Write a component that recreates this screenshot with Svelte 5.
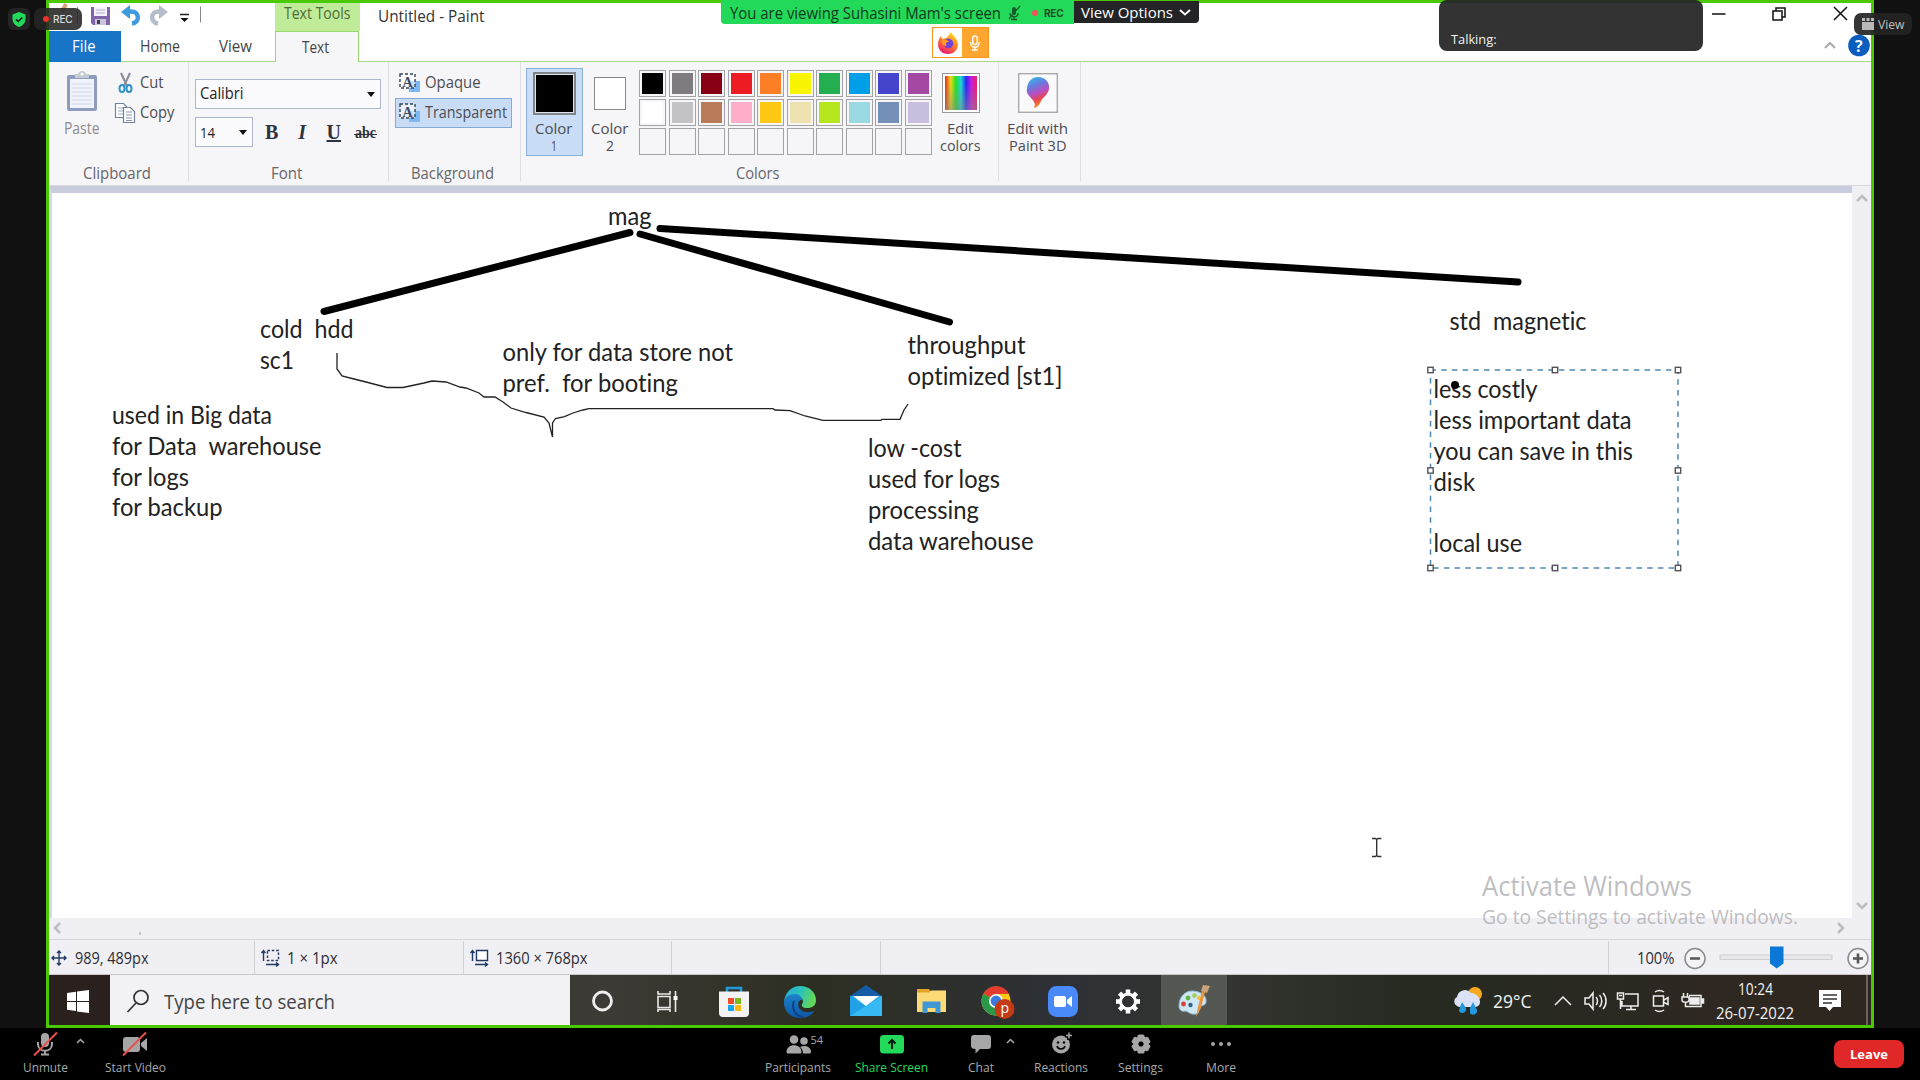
<script>
  const row1 = ['#000', '#7f7c80', '#870016', '#ed1c24', '#ff7f27', '#f8f500', '#23ae50', '#009fe8', '#4444cc', '#a349a4'];
  const row2 = ['#fff', '#c3c3c5', '#b97a57', '#ffaec9', '#ffc814', '#eee3b0', '#b5e51d', '#99d9e2', '#7590b8', '#c8bfdf'];
  const swatches = [...row1, ...row2, ...Array(10).fill('#f6f5f8')];

  const notes = [
    ['mag', 608, 225, 43.5],
    ['cold  hdd', 260, 337.5, 93.5],
    ['sc1', 260, 368.5, 34],
    ['only for data store not', 502.5, 360.5, 230.5],
    ['pref.  for booting', 502.5, 391.5, 175.5],
    ['used in Big data', 112, 423.5, 160],
    ['for Data  warehouse', 112, 454.5, 209.5],
    ['for logs', 112, 485.5, 77],
    ['for backup', 112, 516, 110.5],
    ['throughput', 907.5, 354, 118],
    ['optimized [st1]', 907.5, 384.5, 155],
    ['low -cost', 868, 457, 93.5],
    ['used for logs', 868, 487.5, 132],
    ['processing', 868, 518.5, 111],
    ['data warehouse', 868, 549.5, 165.5],
    ['std  magnetic', 1449.5, 329.5, 137],
    ['less costly', 1433.5, 398, 104],
    ['less important data', 1433.5, 429, 198],
    ['you can save in this', 1433.5, 459.5, 199.5],
    ['disk', 1433.5, 490.5, 41.5],
    ['local use', 1433.5, 552, 88.5]
  ];

  const handles = [
    [1430.5, 370], [1555, 370], [1678, 370],
    [1430.5, 470.5], [1678, 470.5],
    [1430.5, 568], [1555, 568], [1678, 568]
  ];

  const apps = ['cortana', 'tasks', 'store', 'edge', 'mail', 'folder', 'chrome', 'zoom', 'gear', 'paint'];
  const teeth = [0, 45, 90, 135, 180, 225, 270, 315];
</script>

{#snippet label(text, w, size)}
  <svg class="label" width={w} height={size * 1.36}>
    <text x="0" y={size * 1.05} font-size={size} textLength={w} lengthAdjust="spacingAndGlyphs">{text}</text>
  </svg>
{/snippet}

{#snippet marquee()}
  <svg width="21" height="20" viewBox="0 0 21 20">
    <rect x="10" y="8" width="11" height="11" fill="#7db8f5" />
    <rect x="1" y="1" width="15" height="14" fill="#fff" fill-opacity=".6" stroke="#345" stroke-width="1.4" stroke-dasharray="3 2" />
    <text x="3.6" y="13.5" font-family="Liberation Serif" font-weight="bold" font-size="14" fill="#3d4a66">A</text>
  </svg>
{/snippet}

<div class="page">
  <div class="stage">
    <div class="frame">
      <header class="title">
        <div class="quick">
          <svg width="162" height="28" viewBox="0 0 162 28">
            <path d="M17 1l-4 8" stroke="#d8a078" stroke-width="4" />
            <path d="M28.500 4v17" stroke="#999" />
            <path d="M42 4h19v18H44l-2-2z" fill="#8365ab" />
            <path d="M45 4h13v9H45z" fill="#f4f2fa" />
            <path d="M47 7h9M47 10h9" stroke="#b9aed0" />
            <path d="M46 16h11v6H46z" fill="#c9c4d6" /><path d="M48 17h3v4h-3z" fill="#463a63" />
            <path d="M78 8.500h4c9 0 9 11 1 12" fill="none" stroke="#3f9bdd" stroke-width="4.500" />
            <path d="M72 9l9-7v14z" fill="#3f9bdd" />
            <path d="M113 8.500h-3c-9 0-9 11-1 12" fill="none" stroke="#b4bdc9" stroke-width="4.500" />
            <path d="M119 9l-9-7v14z" fill="#b4bdc9" />
            <path d="M131 11.500h9" stroke="#222" stroke-width="1.500" /><path d="M131.500 15h8l-4 4z" fill="#111" />
            <path d="M151.500 3.500v16" stroke="#888" />
          </svg>
        </div>
        <div class="tools">{@render label('Text Tools', 66.5, 15.5)}</div>
        <div class="name">{@render label('Untitled - Paint', 106.5, 16)}</div>
        <svg class="winctl" width="160" height="28" viewBox="0 0 160 28" fill="none" stroke="#111" stroke-width="1.500">
          <path d="M-1 11h13.500" />
          <path d="M60 8h9v9h-9zM63 8V5h9v9h-3" />
          <path d="M121 4l13 13M134 4l-13 13" />
        </svg>
      </header>

      <nav class="tabs">
        <div class="tab file">{@render label('File', 23.5, 15.5)}</div>
        <div class="tab home">{@render label('Home', 40, 15.5)}</div>
        <div class="tab view">{@render label('View', 33, 15.5)}</div>
        <div class="tab text">{@render label('Text', 27, 15.5)}</div>
        <svg class="help" width="50" height="31" viewBox="0 0 50 31">
          <path d="M4 17l5-5 5 5" fill="none" stroke="#aaa" stroke-width="2" />
          <circle cx="38" cy="14.500" r="10.800" fill="#0a5cbd" />
          <text x="34" y="20.500" font-size="16" font-weight="bold" fill="#e8f3ff">?</text>
        </svg>
      </nav>

      <section class="ribbon">
        <div class="group clip">
          <div class="body">
            <div class="paste">
              <svg width="34" height="42" viewBox="0 0 34 42">
                <rect x="2" y="4" width="30" height="36" rx="2" fill="#8e9dbd" />
                <path d="M5 8h24v29H5z" fill="#f0f3fb" />
                <path d="M7 13h20M7 17h20M7 21h20M7 25h20M7 29h20M7 33h20" stroke="#ccd5e8" />
                <path d="M10 3h3c1-4 7-4 8 0h3v4H10z" fill="#c5cad5" /><circle cx="17" cy="3" r="1.500" fill="#fff" />
              </svg>
              {@render label('Paste', 35.5, 15.5)}
            </div>
            <div class="cutcopy">
              <div class="cmd">
                <svg width="22" height="22" viewBox="0 0 22 22" fill="none">
                  <path d="M7 1l6 13M16 1l-6 13" stroke="#8c8f9c" stroke-width="2.200" />
                  <ellipse cx="8" cy="16.500" rx="2.500" ry="3.500" stroke="#2f93c9" stroke-width="2" /><ellipse cx="15" cy="16.500" rx="2.500" ry="3.500" stroke="#2f93c9" stroke-width="2" />
                </svg>
                {@render label('Cut', 23.5, 15.5)}
              </div>
              <div class="cmd">
                <svg width="22" height="22" viewBox="0 0 22 22" fill="#fff" stroke="#76819c" stroke-width="1.200">
                  <path d="M1.500 1.500h8l3 3v11h-11z" /><path d="M4 6h6M4 9h6M4 12h5" stroke="#a4aec4" />
                  <path d="M9.500 5.500h7l4 4v11h-11z" /><path d="M12 10h6M12 13h6M12 16h6M12 18.500h6" stroke="#8794b3" />
                </svg>
                {@render label('Copy', 34.5, 15.5)}
              </div>
            </div>
          </div>
          <div class="cap">{@render label('Clipboard', 68, 15.5)}</div>
        </div>

        <div class="group font">
          <div class="body">
            <div class="combo wide">{@render label('Calibri', 43.5, 15.5)}<i class="tri"></i></div>
            <div class="fontrow">
              <div class="combo small">{@render label('14', 15, 15)}<i class="tri"></i></div>
              <b class="glyph">B</b><i class="glyph it">I</i><b class="glyph un">U</b><b class="glyph st">{@render label('abc', 21, 17)}</b>
            </div>
          </div>
          <div class="cap">{@render label('Font', 31.5, 15.5)}</div>
        </div>

        <div class="group back">
          <div class="body">
            <div class="opt">{@render marquee()}{@render label('Opaque', 55.5, 15.5)}</div>
            <div class="opt on">{@render marquee()}{@render label('Transparent', 82, 15.5)}</div>
          </div>
          <div class="cap">{@render label('Background', 83, 15.5)}</div>
        </div>

        <div class="group colors">
          <div class="body">
            <div class="pick on"><span class="chip big"></span>{@render label('Color', 37.5, 14.5)}{@render label('1', 6, 14.5)}</div>
            <div class="pick two"><span class="chip"></span>{@render label('Color', 37.5, 14.5)}{@render label('2', 8, 14.5)}</div>
            <div class="palette">
              {#each swatches as c}<span class="cell"><span class="fill" style:background={c}></span></span>{/each}
            </div>
            <div class="pick edit">
              <span class="spectrum"></span>
              {@render label('Edit', 26.5, 14.5)}{@render label('colors', 40.5, 14.5)}
            </div>
          </div>
          <div class="cap">{@render label('Colors', 43.5, 15.5)}</div>
        </div>

        <div class="group p3d">
          <div class="pick edit">
            <svg width="40" height="40" viewBox="0 0 40 40">
              <defs>
                <linearGradient id="pin" x1="0" y1="0" x2=".3" y2="1"><stop offset="0" stop-color="#20c5e8" /><stop offset=".35" stop-color="#6a7be0" /><stop offset=".6" stop-color="#b94fc0" /><stop offset=".8" stop-color="#e8474f" /><stop offset="1" stop-color="#f58a2a" /></linearGradient>
              </defs>
              <rect x=".7" y=".7" width="38.600" height="38.600" fill="#fafafc" stroke="#aaa" stroke-width="1.400" />
              <path d="M20 4c7 0 12 5 11 12-1 6-6 8-8 12-1 3-4 7-7 7 2-4 0-7-3-10-3-3-5-6-4-10 1-7 5-11 11-11z" fill="url(#pin)" />
            </svg>
            {@render label('Edit with', 61, 14.5)}{@render label('Paint 3D', 57.5, 14.5)}
          </div>
        </div>
      </section>

      <section class="work">
        <div class="canvas"></div>
        <div class="vscroll">
          <svg width="12" height="9" viewBox="0 0 12 9"><path d="M1 7l5-5 5 5" /></svg>
          <svg width="12" height="9" viewBox="0 0 12 9"><path d="M1 2l5 5 5-5" /></svg>
        </div>
      </section>
      <div class="hscroll">
        <svg width="9" height="12" viewBox="0 0 9 12"><path d="M7 1L2 6l5 5" /></svg>
        <i class="speck"></i>
        <svg class="right" width="9" height="12" viewBox="0 0 9 12"><path d="M2 1l5 5-5 5" /></svg>
      </div>

      <section class="status">
        <div class="stat">
          <svg width="16" height="16" viewBox="0 0 16 16" fill="none" stroke="#243a66" stroke-width="1.400"><path d="M8 1v14M1 8h14M6 3l2-2 2 2M6 13l2 2 2-2M3 6L1 8l2 2M13 6l2 2-2 2" /></svg>
          {@render label('989, 489px', 73.5, 16)}
        </div>
        <div class="stat">
          <svg width="19" height="18" viewBox="0 0 19 18" fill="none" stroke="#243a66" stroke-width="1.400"><path d="M2.500 12V2M.5 4l2-2.500 2 2.500M5 15.500h12M15 13.500l2.500 2-2.500 2" /><path d="M6.500 1.500h11v10h-11z" stroke-dasharray="2.500 1.800" /></svg>
          {@render label('1 × 1px', 50.5, 16)}
        </div>
        <div class="stat">
          <svg width="19" height="18" viewBox="0 0 19 18" fill="none" stroke="#243a66" stroke-width="1.400"><path d="M2.500 12V2M.5 4l2-2.500 2 2.500M5 15.500h12M15 13.500l2.500 2-2.500 2" /><path d="M6.500 1.500h11v10h-11z" fill="#fff" /></svg>
          {@render label('1360 × 768px', 91.5, 16)}
        </div>
        <div class="stat"></div>
        <div class="stat"></div>
        <div class="zoomer">
          {@render label('100%', 37.500, 16)}
          <svg width="197" height="26" viewBox="0 0 197 26">
            <g fill="#f4f4f6" stroke="#8a8a8c" stroke-width="1.500"><circle cx="12" cy="13.500" r="10" /><circle cx="175" cy="13.500" r="10" /></g>
            <path d="M7 13.500h10M170 13.500h10M175 8.500v10" stroke="#555" stroke-width="2.600" />
            <rect x="37" y="10" width="112" height="4.500" fill="#e9e9eb" stroke="#cfcfd3" />
            <path d="M87 1.500h13.500v17l-6.750 5-6.750-5z" fill="#0b78d8" />
          </svg>
        </div>
      </section>

      <footer class="taskbar">
        <div class="start">
          <svg width="22" height="23" viewBox="0 0 22 23" fill="#fff"><path d="M0 3l9-1.300v9.300H0zM10 1.500L22 0v11H10zM0 12h9v9l-9-1.300zM10 12h12v11l-12-1.600z" /></svg>
        </div>
        <div class="search">
          <svg width="24" height="24" viewBox="0 0 24 24" fill="none" stroke="#333" stroke-width="1.700"><circle cx="15" cy="8.500" r="7" /><path d="M10 14l-8.500 9" /></svg>
          {@render label('Type here to search', 171, 20.5)}
        </div>
        <div class="apps">
          {#each apps as a}
            <div class={['app', a === 'paint' && 'active']}>
              <svg width="36" height="36" viewBox="0 0 36 36">
                {#if a === 'cortana'}
                  <circle cx="17.500" cy="17" r="9" fill="none" stroke="#eee" stroke-width="2.800" />
                {:else if a === 'tasks'}
                  <g fill="none" stroke="#e8e8e8" stroke-width="1.600"><path d="M7 12.500h12v11H7zM7 7v3h12V7M7 28v-2.500h12V28M24.500 7v21" /></g><path d="M22.500 12h4v4h-4z" fill="#fff" />
                {:else if a === 'store'}
                  <path d="M11 9V4h14v5" fill="none" stroke="#1e9bd8" stroke-width="2.600" />
                  <path d="M3 7.500h30V29a4 4 0 0 1-4 4H7a4 4 0 0 1-4-4z" fill="#f3f3f4" />
                  <path d="M12 14h6v6h-6z" fill="#f04f23" /><path d="M19 14h6v6h-6z" fill="#7db821" /><path d="M12 21h6v6h-6z" fill="#17a5e5" /><path d="M19 21h6v6h-6z" fill="#fdb813" />
                {:else if a === 'edge'}
                  <defs>
                    <linearGradient id="eg" x1="0" y1="0" x2="1" y2=".3"><stop offset="0" stop-color="#25a9df" /><stop offset=".55" stop-color="#2cc3b8" /><stop offset="1" stop-color="#62d65c" /></linearGradient>
                    <linearGradient id="eb" x1="0" y1="0" x2="0" y2="1"><stop offset="0" stop-color="#1d83cc" /><stop offset="1" stop-color="#0d55a5" /></linearGradient>
                  </defs>
                  <path d="M2 18C3 8 10 2 18 2c10 0 16 7 16 14 0 6-4 8-9 8-4 0-6-2-5-4 2-2 1-7-4-7-6 0-12 3-14 5z" fill="url(#eg)" />
                  <path d="M2 19c0-6 5-9 11-9 4 0 7 3 7 6-5-1-6 10 3 12 5 1 7-1 9-1-3 5-8 7-14 7C8 34 2 27 2 19z" fill="url(#eb)" />
                  <path d="M12 17c-3 7 1 15 9 16" fill="none" stroke="#0a4388" stroke-width="2" />
                {:else if a === 'mail'}
                  <path d="M2 12L18 1l16 11z" fill="#145ca5" /><path d="M2 12h32v20H2z" fill="#27a5e8" /><path d="M5 12h26L18 22z" fill="#fff" /><path d="M2 32V12l16 11 16-11v20z" fill="#22a2e6" /><path d="M2 32l32-20v20z" fill="#37b9f4" />
                {:else if a === 'folder'}
                  <path d="M4 5h12l2 3h14v20H4z" fill="#e5a128" /><path d="M4 8.500h12l2-2h15V28H4z" fill="#fcdb76" /><path d="M9.500 29V17.500h18V29h-5v-5h-8v5z" fill="#3f97d3" />
                {:else if a === 'chrome'}
                  <circle cx="17" cy="17" r="14.500" fill="#fbc718" /><path d="M17 17L4.400 9.800A14.500 14.500 0 0 1 30 10H17z" fill="#e33b2e" /><path d="M17 17L4.400 9.800A14.500 14.500 0 0 0 17 31.500l6-10z" fill="#29984a" />
                  <circle cx="17" cy="17" r="7" fill="#fff" /><circle cx="17" cy="17" r="5.400" fill="#3b7be0" />
                  <circle cx="25.500" cy="25" r="10" fill="#c23a16" /><text x="21.500" y="29" font-size="14" fill="#fff">p</text>
                {:else if a === 'zoom'}
                  <rect x="3" y="2" width="30" height="31" rx="8.500" fill="#4a8af8" /><rect x="9" y="12" width="12" height="11" rx="2" fill="#fff" /><path d="M22 16l5-4v11l-5-4z" fill="#fff" />
                {:else if a === 'gear'}
                  <g fill="#fff">{#each teeth as t}<rect x="15.700" y="5.500" width="4.600" height="6" transform="rotate({t} 18 17.500)" />{/each}</g><circle cx="18" cy="17.500" r="7.500" fill="none" stroke="#fff" stroke-width="3" />
                {:else}
                  <path d="M3 22C3 13 9 7 16 7c9 0 15 5 14 11-1 5-5 2-7 6-1 3 1 5-3 6-6 1-8-3-11-3-3 1-6-1-6-5z" fill="#cfe6f3" stroke="#8fbcd8" />
                  <circle cx="7.500" cy="20" r="2.400" fill="#d8413c" /><circle cx="12" cy="14" r="2.400" fill="#63b649" /><circle cx="18.500" cy="11.500" r="2.300" fill="#a4cf4e" /><circle cx="23" cy="14" r="2" fill="#f3bf2e" /><circle cx="14.500" cy="21" r="2.200" fill="#33628c" />
                  <path d="M20 33l2-10 4-16 3 1-4 16z" fill="#e9953f" /><path d="M25 7l2-6 7 1-3 7z" fill="#c9a27a" />
                {/if}
              </svg>
            </div>
          {/each}
        </div>
        <div class="tray">
          <svg width="30" height="30" viewBox="0 0 30 30"><circle cx="22" cy="8" r="7" fill="#f7a81c" /><path d="M4 20a5 5 0 0 1 0-9 8 8 0 0 1 14-4c5 0 9 4 9 9 0 4-3 5-6 5H6z" fill="#dbe2f7" /><path d="M7 21l2-5 4 6c1 6-6 6-7 3zM17 22l3-6 4 8c1 5-6 6-7 3z" fill="#2398e0" /></svg>
          <div class="temp">{@render label('29°C', 38.5, 18)}</div>
          <svg class="icons" width="150" height="26" viewBox="0 0 150 26" fill="none" stroke="#eee" stroke-width="1.500">
            <path d="M1 17l8-8 8 8" />
            <path d="M31 10h4l4-5v16l-4-5h-4zM42 9c2 2 2 6 0 8M45.500 7c3 3 3 9 0 12M49 5c4 4 4 12 0 16" />
            <path d="M71 6h13v12H68v-5M72 21.500h10M77 18v3M63.500 5h6v6h-6zM66.500 11v10M65 7.500h3" />
            <path d="M99.500 8h10v10h-10zM110 12l4-2.500v7l-4-2M101 4c3-2 6-2 9 0M101 22c3 2 6 2 9 0" />
            <path d="M135 7.500h12v11h-12M148 11v4h1.500v-4zM129.500 5v4M133.500 5v4M128 9h7v3c0 3-7 3-7 0zM131.500 14v4.500h4" /><path d="M136 10h9v6h-9z" fill="#eee" />
          </svg>
          <div class="clock">{@render label('10:24', 35, 16)}{@render label('26-07-2022', 78, 16)}</div>
          <svg width="24" height="24" viewBox="0 0 24 24"><path d="M1 1h22v17h-8l-3.500 4L8 18H1z" fill="#fff" /><path d="M5 6h14M5 10h14M5 14h9" stroke="#333" stroke-width="1.500" /></svg>
        </div>
        <div class="peek"></div>
      </footer>
    </div>
  </div>

  <footer class="meeting">
    <div class="item unmute">
      <svg width="30" height="26" viewBox="0 0 30 26"><rect x="11" y="1" width="8" height="14" rx="4" fill="#a6a6a6" /><path d="M8 10v2c0 9 14 9 14 0v-2M15 19v3M11 22.500h8" fill="none" stroke="#a6a6a6" stroke-width="2" /><path d="M4 23.500L27 0.500" stroke="#e8504c" stroke-width="2" /></svg>
      {@render label('Unmute', 45, 13)}
    </div>
    <svg class="caret" width="9" height="6" viewBox="0 0 9 6"><path d="M1 5l3.500-3.500L8 5" /></svg>
    <div class="item video">
      <svg width="30" height="26" viewBox="0 0 30 26"><rect x="3" y="5" width="17" height="15" rx="3" fill="#a6a6a6" /><path d="M21 11l6-5v13l-6-5z" fill="#a6a6a6" /><path d="M3 23.500L26 0.500" stroke="#e8504c" stroke-width="2" /></svg>
      {@render label('Start Video', 61, 13)}
    </div>
    <div class="middle">
      <div class="item">
        <svg width="40" height="26" viewBox="0 0 40 26" fill="#a6a6a6"><circle cx="16" cy="7.500" r="4.300" /><circle cx="26" cy="9" r="3.800" /><path d="M8.500 20c0-9 15-9 15 0 0 1-1 1.500-2 1.500h-11c-1 0-2-.5-2-1.500zM25 21.500c0-3-1-5-3-6.500 4-2 11-1 11 5 0 1-1 1.500-2 1.500z" /><text x="32.500" y="11.500" font-size="11" textLength="12.500">54</text></svg>
        {@render label('Participants', 66, 13)}
      </div>
      <div class="item green">
        <svg width="30" height="26" viewBox="0 0 30 26"><rect x="3" y="3" width="24" height="18.500" rx="3.500" fill="#23d959" /><path d="M15 17V8M11.500 11.500L15 8l3.500 3.500" fill="none" stroke="#06170b" stroke-width="2" /></svg>
        {@render label('Share Screen', 73, 13)}
      </div>
      <div class="item">
        <svg width="30" height="26" viewBox="0 0 30 26"><path d="M8 3h14q3 0 3 3v8q0 3-3 3H14l-4.500 4.500V17Q5 17 5 14V6q0-3 3-3z" fill="#a6a6a6" /></svg>
        {@render label('Chat', 26, 13)}
      </div>
      <div class="item">
        <svg width="30" height="26" viewBox="0 0 30 26"><circle cx="15" cy="12.500" r="9" fill="#a6a6a6" /><circle cx="12" cy="10.500" r="1.200" /><circle cx="18" cy="10.500" r="1.200" /><path d="M11 14c1 4 7 4 8 0" fill="none" stroke="#000" stroke-width="1.500" /><path d="M23 -1v9M19 3.500h8" stroke="#000" stroke-width="4" /><path d="M23 0.500v6M20 3.500h6" stroke="#a6a6a6" stroke-width="1.500" /></svg>
        {@render label('Reactions', 54, 13)}
      </div>
      <div class="item">
        <svg width="30" height="26" viewBox="0 0 30 26"><g fill="#a6a6a6">{#each [0, 60, 120, 180, 240, 300] as t}<rect x="11.500" y="2.500" width="7" height="7" rx="1.500" transform="rotate({t} 15 12)" />{/each}</g><circle cx="15" cy="12" r="6" fill="none" stroke="#a6a6a6" stroke-width="4" /></svg>
        {@render label('Settings', 45, 13)}
      </div>
      <div class="item">
        <svg width="30" height="26" viewBox="0 0 30 26" fill="#a6a6a6"><circle cx="7" cy="12" r="2" /><circle cx="15" cy="12" r="2" /><circle cx="23" cy="12" r="2" /></svg>
        {@render label('More', 30, 13)}
      </div>
    </div>
    <svg class="caret chatcaret" width="9" height="6" viewBox="0 0 9 6"><path d="M1 5l3.500-3.500L8 5" /></svg>
    <button class="leave">Leave</button>
  </footer>

  <!-- Drawing layer of the canvas: strokes, notes, the active text box and the pointer -->
  <svg class="drawing" width="1920" height="1080" viewBox="0 0 1920 1080">
    <g stroke="#000" stroke-width="7" stroke-linecap="round">
      <path d="M324 311.500L630 232.500" /><path d="M640 234L949.500 322" /><path d="M660 228.500L1518 282" />
    </g>
    <path fill="none" stroke="#222" stroke-width="1.300" d="M337 353V369L342 376 354 379 366 382 387 387.500H403L424 383 432 381 446 382 460 387 466 388 479 393 484 397H495L503 402 511 408 526 412.500 544 417 549 423 552.500 437V423L555.500 418.500 564.500 416.700 573 413 583 410 589 408.700H773L775 410 790 410.700 805 416 823 420.300H881L882 419.300H900L904 410 908 404" />
    {#each notes as [text, x, y, w]}
      <text class="note" {x} {y} textLength={w} lengthAdjust="spacingAndGlyphs">{text}</text>
    {/each}
    <circle cx="1455" cy="385" r="4" />
    <rect x="1430.500" y="370" width="247.500" height="198" fill="none" stroke="#5088ae" stroke-width="1.500" stroke-dasharray="5.500 5.200" />
    {#each handles as [x, y]}<rect x={x - 2.7} y={y - 2.7} width="5.400" height="5.400" fill="#fff" stroke="#55525c" stroke-width="1.400" />{/each}
    <path d="M1372 838.500h3.500l1.200 1 1.200-1h3.500M1372 856.500h3.500l1.200-1 1.200 1h3.500M1376.700 839.500v16" fill="none" stroke="#333" stroke-width="1.400" />
    <g fill="#a5a5aa" fill-opacity=".72">
      <text x="1482" y="895.500" font-size="26.500" textLength="210" lengthAdjust="spacingAndGlyphs">Activate Windows</text>
      <text x="1482" y="923.500" font-size="20" textLength="316" lengthAdjust="spacingAndGlyphs">Go to Settings to activate Windows.</text>
    </g>
  </svg>

  <!-- Floating meeting overlays -->
  <div class="float shield">
    <svg width="14" height="15" viewBox="0 0 14 15"><path d="M7 0l6.500 2.500v4C13.500 11 11 13.500 7 15 3 13.500.5 11 .5 6.500v-4z" fill="#23d959" /><path d="M4 7.300l2.200 2.200L10.300 5.500" fill="none" stroke="#111" stroke-width="1.500" /></svg>
  </div>
  <div class="float rec"><i class="dot"></i><span>REC</span></div>
  <div class="float banner">
    {@render label("You are viewing Suhasini Mam's screen", 271, 16)}
    <svg width="14" height="16" viewBox="0 0 14 16"><rect x="5" y="2" width="4" height="8" rx="2" fill="#145c2b" /><path d="M3 8c0 5 8 5 8 0M7 12v2M4 14.500h6M2 14L13 1" fill="none" stroke="#145c2b" stroke-width="1.300" /></svg>
    <i class="dot"></i><b>REC</b>
  </div>
  <div class="float options">
    {@render label('View Options', 92, 15)}
    <svg width="12" height="7" viewBox="0 0 12 7"><path d="M1 1l5 4.500L11 1" fill="none" stroke="#fff" stroke-width="2" /></svg>
  </div>
  <div class="float sharing">
    <div class="fox">
      <svg width="22" height="24" viewBox="0 0 22 24">
        <defs><linearGradient id="ff" x1=".8" y1="0" x2=".3" y2="1"><stop offset="0" stop-color="#ffe52f" /><stop offset=".45" stop-color="#ff8a1e" /><stop offset="1" stop-color="#f0147a" /></linearGradient></defs>
        <path d="M14 1c1 3 6 5 7 12 0 6-4 10-10 10S1 19 1 13C1 10 2 7 4 5l1 3 4-1c2-1 3-4 5-6z" fill="url(#ff)" /><circle cx="11.500" cy="12.500" r="4.800" fill="#7044d8" /><path d="M5 9c3-1 6 0 7 2-3 0-4 2-2 4-4 0-6-3-5-6z" fill="#ff9a26" />
      </svg>
    </div>
    <div class="mic">
      <svg width="12" height="18" viewBox="0 0 12 18" fill="none" stroke="#fff" stroke-width="1.400"><rect x="3.700" y="2" width="4.600" height="8.500" rx="2.300" /><path d="M1.500 8c0 7 9 7 9 0M6 13v3M3 16h6" /></svg>
    </div>
  </div>
  <div class="float talking">{@render label('Talking:', 45.5, 13.5)}</div>
  <div class="float viewbtn">
    <svg width="12" height="12" viewBox="0 0 12 12" fill="#b9b9b9"><path d="M0 0h3v3H0zM4.500 0h3v3h-3zM9 0h3v3H9zM0 4h12v8H0z" /></svg>
    {@render label('View', 26.5, 13.5)}
  </div>
</div>

<style>
  :global(body) { margin: 0; background: #000; }
  .page { position: relative; width: 1920px; height: 1080px; overflow: hidden; background: #111; font-family: 'Open Sans', 'Noto Sans', sans-serif; color: #3c3c40; }
  .page * { box-sizing: border-box; }
  svg { display: block; flex: none; overflow: visible; }
  .label text { fill: currentColor; }
  .stage { display: flex; justify-content: center; height: 1028px; }
  .frame { width: 1828px; height: 1028px; border: 3px solid #4bc900; display: flex; flex-direction: column; background: #fff; }

  .title { height: 28px; display: flex; }
  .quick { width: 226px; }
  .tools { width: 85px; background: #c0eb98; padding: 0 0 0 9px; color: #4b6b3c; }
  .name { padding: 2px 0 0 18px; color: #333; }
  .winctl { margin-left: auto; margin-right: -2px; }

  .tabs { height: 31px; display: flex; background: #fff; border-bottom: 1px solid #a6da86; }
  .tab { display: flex; justify-content: center; align-items: center; color: #444; height: 31px; padding-top: 1px; }
  .file { width: 72px; background: #1874c6; color: #fff; padding-right: 3px; }
  .home { width: 78px; }
  .view { width: 76px; padding-right: 4px; }
  .text { width: 84px; background: #f6f5f8; border: 1px solid #98d870; border-bottom: 0; padding-right: 3px; }
  .help { margin-left: auto; }

  .ribbon { height: 124px; display: grid; grid-template-columns: 140px 200px 132px 478px 82px 1fr; background: #f6f5f8; border-bottom: 1px solid #d8d8de; }
  .group { display: flex; flex-direction: column; align-items: center; height: 119px; padding-top: 3px; border-right: 1px solid #dedee3; color: #4d4d52; }
  .body { height: 98px; width: 100%; flex: none; }
  .cap { color: #66666b; padding-right: 4px; }
  .clip .body { display: flex; }
  .paste { display: flex; flex-direction: column; align-items: center; gap: 5px; width: 65px; padding: 6px 0 0 0; color: #8c8c90; }
  .cutcopy { display: flex; flex-direction: column; gap: 8px; padding-top: 7px; }
  .cmd { display: flex; gap: 4px; align-items: center; height: 22px; }
  .font .body { padding: 14px 0 0 6px; }
  .combo { display: flex; align-items: center; justify-content: space-between; height: 30px; background: #fbfbfe; border: 1px solid #abb8cc; padding: 0 5px 0 4px; color: #222; }
  .wide { width: 186px; }
  .small { width: 58px; }
  .tri { border: 4px solid transparent; border-top: 5px solid #111; border-bottom: 0; }
  .fontrow { display: flex; align-items: center; margin-top: 8px; }
  .glyph { font-family: 'Liberation Serif', serif; font-size: 20px; line-height: 24px; width: 31.500px; text-align: center; color: #2d3440; }
  .fontrow .small + .glyph { margin-left: 3px; }
  .it { font-weight: bold; margin-left: -1px; }
  .un { text-decoration: underline; }
  .st { display: flex; justify-content: center; background: linear-gradient(#2d3440, #2d3440) center 14px / 23px 1px no-repeat; }
  .back .body { padding: 3px 0 0 6px; }
  .opt { display: flex; align-items: center; gap: 5px; width: 117px; height: 30px; padding-left: 4px; }
  .opt.on { background: #c9dcf5; border: 1px solid #86aad4; padding-left: 3px; gap: 4.500px; }

  .colors .body { display: flex; }
  .pick { display: flex; flex-direction: column; align-items: center; width: 57px; height: 88px; }
  .pick .label { margin-bottom: -2.500px; }
  .pick.on { margin: 3px 0 0 5px; background: #c9def6; border: 1px solid #8db2da; padding-right: 1px; }
  .chip { width: 32px; height: 33px; margin: 9px 0 9px; border: 1.500px solid #888; background: #fff; }
  .chip.big { width: 43px; height: 43px; margin: 3px 0 4px; border: 2px solid #808488; background: #000; box-shadow: inset 0 0 0 1px #dce6f0; }
  .two { margin-top: 3px; width: 53px; }
  .palette { display: grid; grid-template-columns: repeat(10, 27px); grid-auto-rows: 27px; gap: 2.400px 2.500px; padding: 4.500px 0 0 3px; }
  .cell { border: 1.500px solid #a3a3a6; padding: 2px; background: #f6f5f8; }
  .fill { display: block; width: 100%; height: 100%; }
  .edit { width: 64px; padding-top: 8px; }
  .spectrum { width: 38px; height: 40px; margin-bottom: 6px; border: 1.500px solid #999; padding: 2px; background: linear-gradient(transparent 25%, #8888 100%) content-box, linear-gradient(90deg, #e8291c, #e8d81c 18%, #22e028 34%, #1cd6e0 50%, #2828f0 66%, #c81ce0 82%, #ee2060) content-box, #fff; }
  .colors .edit { margin-left: -3px; }
  .p3d svg:first-child { margin-bottom: 6px; }
  .p3d .edit { padding-top: 8px; margin-right: 4px; }

  .work { height: 732px; display: flex; justify-content: space-between; background: #f0eff3; }
  .canvas { width: 1803px; border-left: 3px solid #d4dae7; border-top: 7px solid #c8ccdc; background: #fff; }
  .vscroll { width: 19px; display: flex; flex-direction: column; justify-content: space-between; align-items: center; padding: 8px 0; }
  .vscroll path, .hscroll path { fill: none; stroke: #bcbcc1; stroke-width: 2.500; }
  .hscroll { height: 22px; display: flex; align-items: center; background: #f0eff3; padding: 0 26px 1px 4px; border-bottom: 1px solid #d4d4d8; }
  .right { margin-left: auto; }
  .speck { width: 2px; height: 3px; margin: 11px 0 0 77px; background: #c6c6ca; }

  .status { height: 35px; display: grid; grid-template-columns: 206px 209px 208px 209px 728px 1fr; background: #f0eff3; color: #2d2d33; border-bottom: 1px solid #c8c8cc; padding-top: 1px; }
  .stat { display: flex; align-items: center; gap: 8px; border-right: 1px solid #d2d2d6; height: 33px; padding: 0 0 0 2px; }
  .stat + .stat { padding-left: 6px; gap: 7px; }
  .zoomer { display: flex; align-items: center; gap: 8px; padding-left: 28px; }

  .taskbar { height: 50px; display: flex; background: linear-gradient(90deg, #2a211f 0 6%, #3c3b35 30%, #2d2e22 42%, #2d3035 55%, #33332f 65%, #252b21 75%, #2d2821 90%, #2d271f); }
  .start { width: 61px; display: flex; align-items: center; justify-content: center; padding: 2px 4px 0 0; }
  .search { width: 460px; display: flex; align-items: center; gap: 14px; padding: 2px 0 0 16px; background: #f2f1f3; color: #444; }
  .apps { display: flex; }
  .app { width: 65.700px; display: flex; align-items: center; justify-content: center; padding-top: 4px; }
  .active { background: #555852; }
  .tray { display: flex; align-items: center; margin-left: auto; margin-right: -1px; padding-top: 2px; color: #f3f3f3; }
  .temp { margin-left: 10px; }
  .icons { margin-left: 23px; }
  .clock { display: flex; flex-direction: column; align-items: center; gap: 2px; width: 78px; margin: 0 24px 0 12px; }
  .peek { width: 5px; margin-left: 25px; border-left: 2px solid #666560; }

  .meeting { height: 52px; background: #000; display: flex; color: #a8a8a8; }
  .item { width: 80px; display: flex; flex-direction: column; align-items: center; padding-top: 4px; gap: 0; }
  .unmute { margin-left: 5px; width: 80px; }
  .caret { margin: 10px 0 0 -9px; }
  .caret path { fill: none; stroke: #a8a8a8; stroke-width: 1.500; }
  .video { margin-left: 10px; }
  .middle { display: grid; grid-template-columns: 96px 91px 87px 73px 87px 74px; justify-items: center; margin-left: 575px; }
  .green { color: #23d959; }
  .chatcaret { margin-left: -252px; }
  .leave { margin: 12px 16px 0 auto; width: 70px; height: 28px; border: 0; border-radius: 8px; background: #e02828; color: #fff; font: bold 13px 'Open Sans', sans-serif; padding: 0; }

  .drawing { position: absolute; inset: 0; pointer-events: none; }
  .note { font-family: Lato, sans-serif; font-size: 24.200px; fill: #222; white-space: pre; font-variant-ligatures: none; }

  .float { position: absolute; display: flex; align-items: center; }
  .shield { left: 8px; top: 8px; width: 22px; height: 22px; border-radius: 6px; background: #242424; justify-content: center; }
  .rec { left: 34px; top: 8px; width: 48px; height: 22px; border-radius: 7px; background: rgba(36, 36, 36, .88); gap: 4px; padding-left: 9px; font: 500 10px Inter, sans-serif; letter-spacing: -.1px; color: #ddd; }
  .dot { width: 6px; height: 6px; border-radius: 50%; background: #e8302c; }
  .banner { left: 721px; top: 0; width: 353px; height: 24px; background: #23d959; border-radius: 0 0 0 4px; padding: 2px 0 0 9px; color: #123a1f; }
  .banner svg + svg { margin-left: 6px; }
  .banner .dot { margin: 0 6px 0 11px; background: #f5535b; }
  .banner b { font: bold 10px Inter, sans-serif; letter-spacing: -.2px; color: #174d28; }
  .options { left: 1074px; top: 1px; width: 125px; height: 22px; background: #242426; border-radius: 0 0 4px 0; color: #fff; gap: 6px; padding: 1px 0 0 7px; }
  .sharing { left: 932px; top: 27px; width: 57px; height: 31px; border: 1px solid #f7941d; }
  .fox { width: 29px; height: 29px; background: #fff; display: flex; align-items: center; justify-content: center; }
  .mic { flex: 1; height: 29px; background: #ffa630; display: flex; align-items: center; justify-content: center; }
  .talking { left: 1439px; top: 0; width: 264px; height: 51px; border-radius: 8px; background: rgba(36, 36, 36, .93); align-items: flex-end; padding: 0 0 3px 12px; color: #f2f2f2; }
  .viewbtn { left: 1854px; top: 13px; width: 58px; height: 22px; border-radius: 7px; background: rgba(36, 36, 36, .92); gap: 4px; padding-left: 8px; color: #c0c0c0; }
</style>
